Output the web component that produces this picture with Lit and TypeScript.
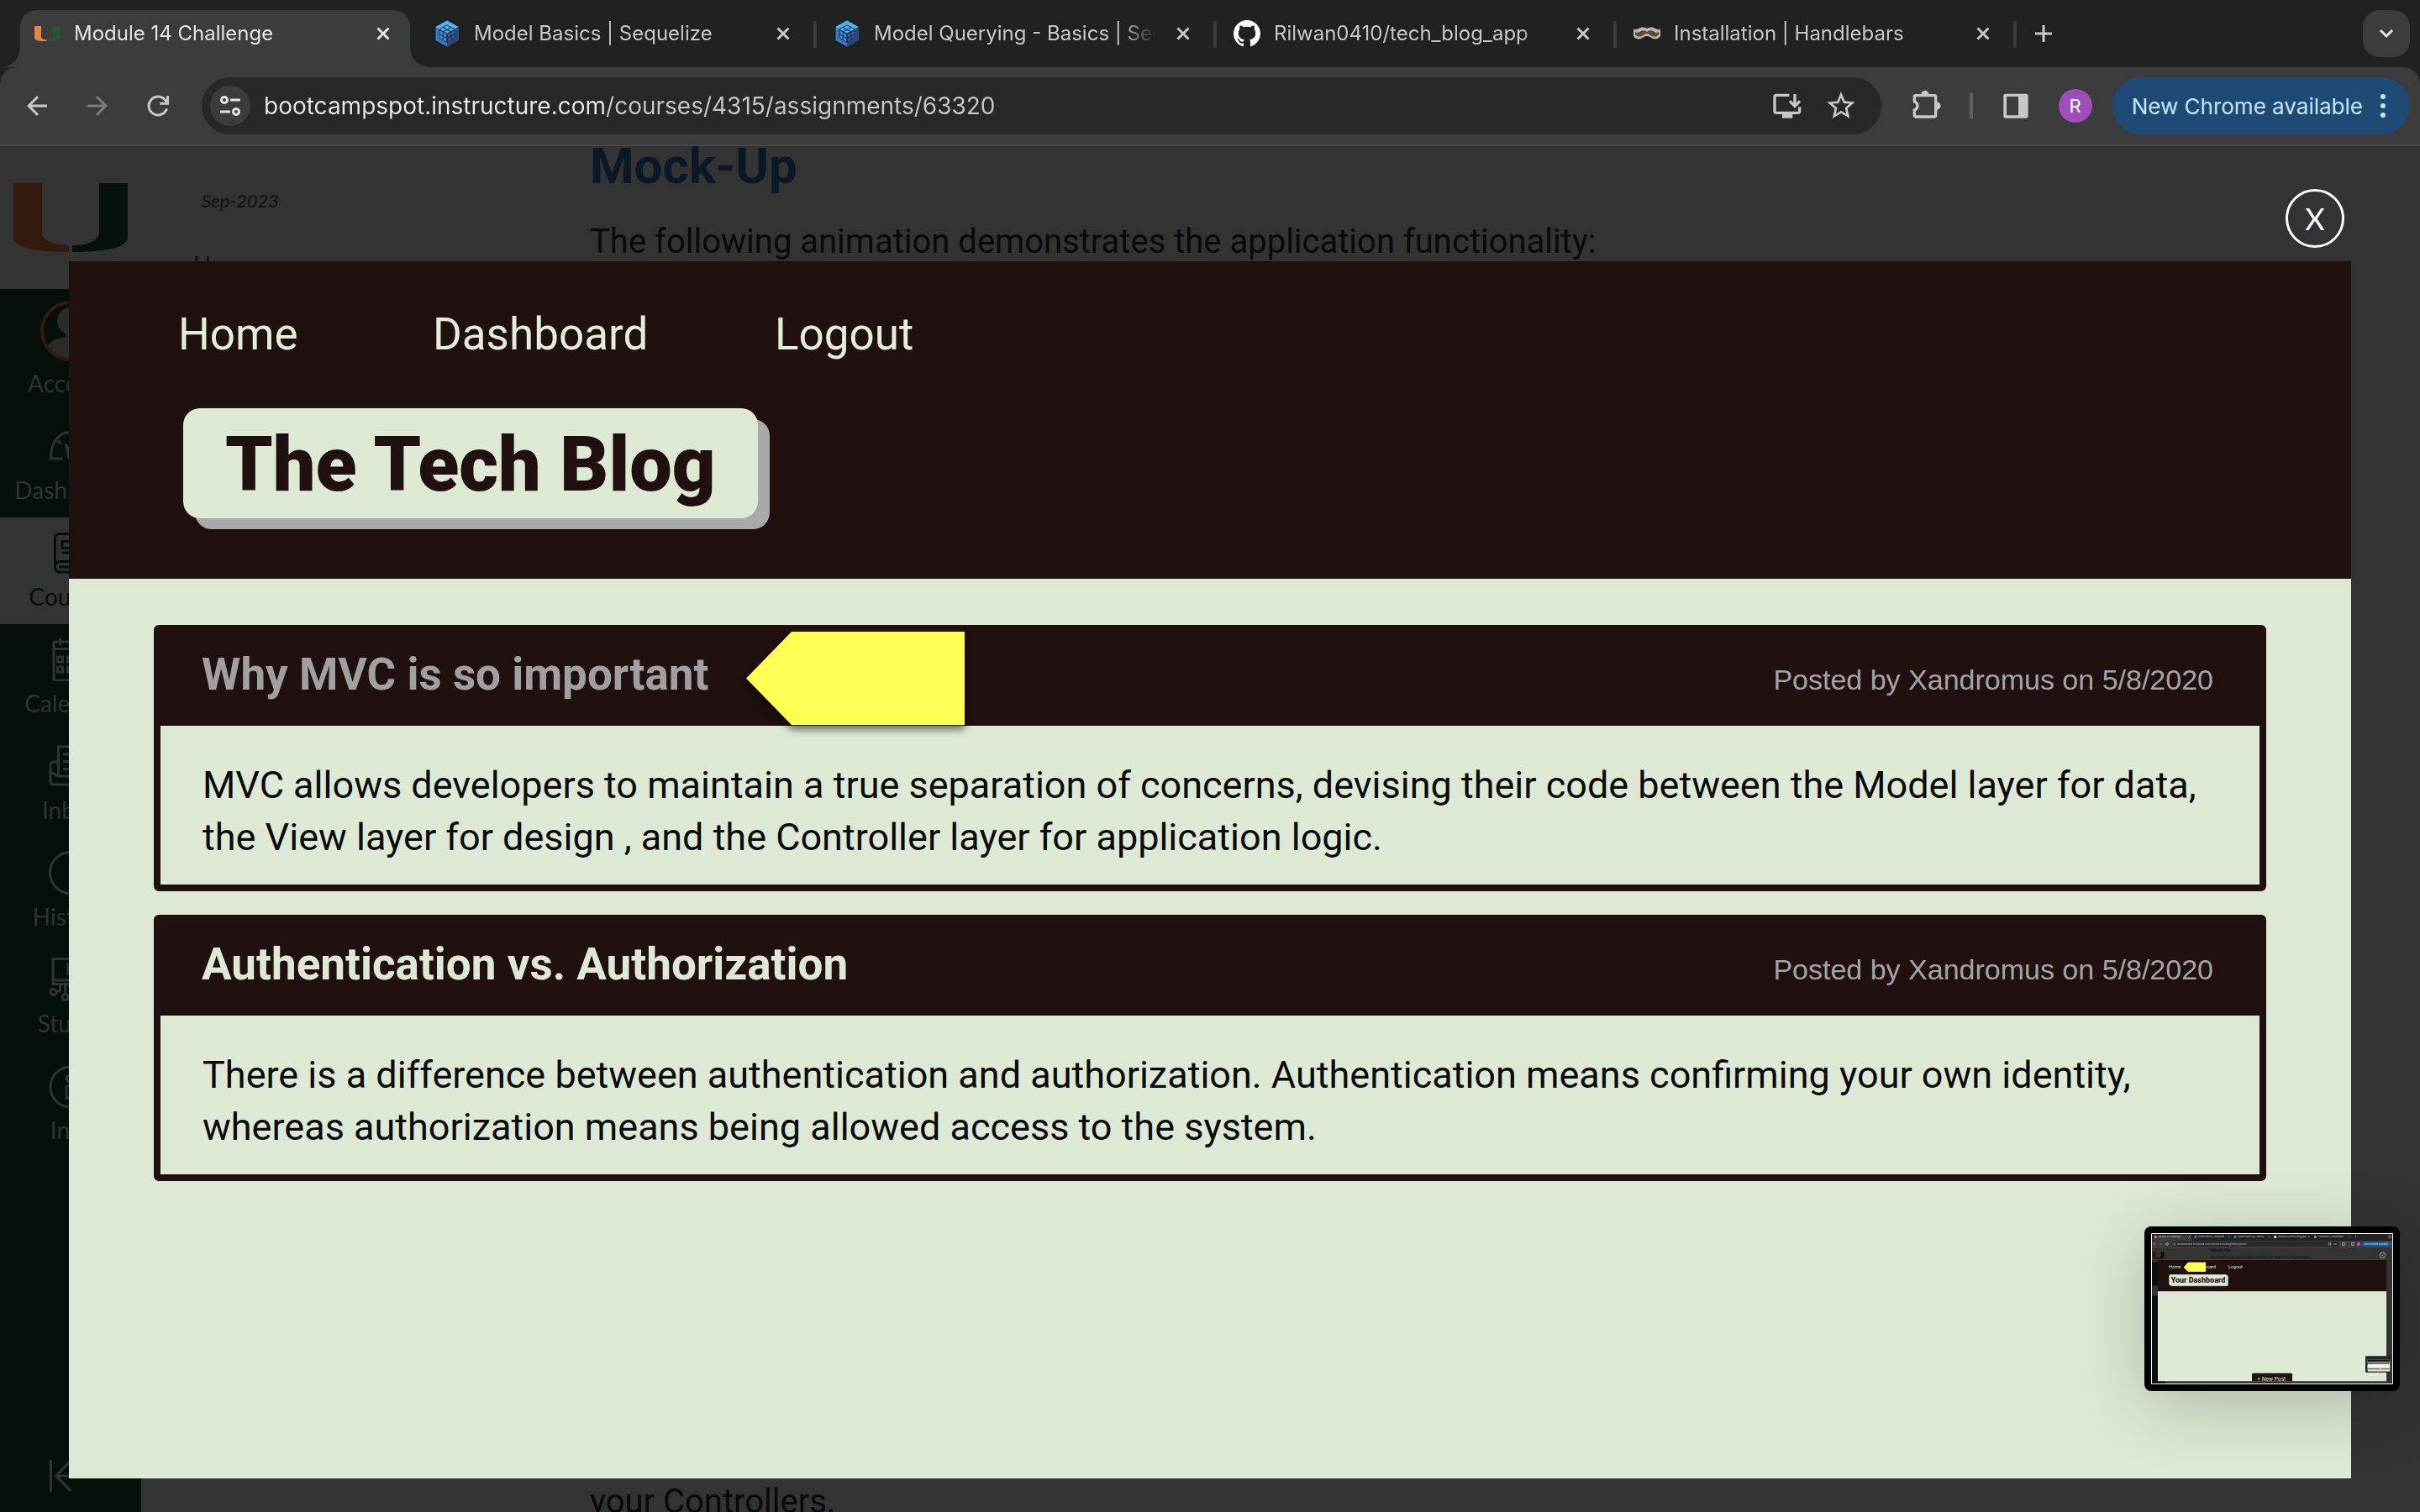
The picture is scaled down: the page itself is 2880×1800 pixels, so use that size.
import { LitElement, html, css, svg, nothing } from "lit";
import { customElement } from "lit/decorators.js";
import { classMap } from "lit/directives/class-map.js";

/* ---------- favicons ---------- */

const favMiami = html`<svg class="fav" viewBox="0 0 32 32" aria-hidden="true">
  <path d="M1 7h8v12c0 3 2 4 6.500 4v2C6 25.500 1 24.500 1 20.500z" fill="#e8843c" />
  <path d="M31 7h-8v12c0 3-2 4-6.500 4v2C26 25.500 31 24.500 31 20.500z" fill="#1f5a35" />
</svg>`;

const favSequelize = html`<svg class="fav" viewBox="0 0 32 32" aria-hidden="true">
  <path d="M16 0.500 29.500 8v16L16 31.500 2.500 24V8z" fill="#3b78c6" />
  <path d="M16 0.500 29.500 8 25.500 10.500 16 5.500 6.500 10.500 2.500 8z" fill="#4db4f2" />
  <path d="M29.500 8v16L16 31.500V27l9.500-5.500v-11z" fill="#33457f" />
  <path d="M16 5.500 25.500 10.500v11L16 27l-9.500-5.500v-11z" fill="#1c2f52" />
  <path d="M16 6.500 24.500 11 16 15.500 7.500 11z" fill="#52b6f3" />
  <path d="M7.500 12.500 15 16.500v9L7.500 21z" fill="#3f8fdc" />
  <path d="M24.500 12.500 17 16.500v9l7.500-4.500z" fill="#35619f" />
  <path d="M11.500 9l8.500 4.500M20.500 9 12 13.500M7.500 17l7.500 4M24.500 17 17 21M11.200 14.500v9M20.800 14.500v9" stroke="#1c2f52" stroke-width="1.200" fill="none" />
</svg>`;

const favGithub = html`<svg class="fav" viewBox="0 0 16 16" aria-hidden="true">
  <path fill="#fff" d="M8 0C3.580 0 0 3.580 0 8c0 3.540 2.290 6.530 5.470 7.590.4.070.550-.170.550-.380 0-.190-.010-.820-.010-1.490-2.010.370-2.530-.490-2.690-.940-.090-.230-.480-.940-.820-1.130-.280-.150-.680-.520-.010-.530.630-.010 1.080.580 1.230.820.720 1.210 1.870.870 2.330.660.070-.520.280-.870.510-1.070-1.780-.2-3.640-.890-3.640-3.950 0-.870.310-1.590.820-2.150-.080-.2-.360-1.020.080-2.120 0 0 .670-.210 2.200.820.640-.180 1.320-.270 2-.270.680 0 1.360.090 2 .270 1.530-1.040 2.200-.820 2.200-.820.440 1.100.160 1.920.080 2.120.510.560.820 1.270.820 2.150 0 3.070-1.870 3.750-3.650 3.950.290.250.540.730.540 1.480 0 1.070-.010 1.930-.010 2.200 0 .210.150.460.550.380A8.013 8.013 0 0 0 16 8c0-4.420-3.580-8-8-8z" />
</svg>`;

const favHandlebars = html`<svg class="fav" viewBox="0 0 32 32" aria-hidden="true">
  <path d="M0 10c2 2 4 1 6 0 3-2 7-2 10 0 3-2 7-2 10 0 2 1 4 2 6 0v9c-2 3-5 4-9 3-2-1-4-3-7-3s-5 2-7 3c-4 1-7 0-9-3z" fill="#bdb5aa" />
  <path d="M2 14c3 2 5 0 7-1 2-1 5-1 7 1 2-2 5-2 7-1 2 1 4 3 7 1v3c-2 3-5 3-8 2s-3-3-6-3-4 2-6 3-6 1-8-2z" fill="#5d4a3a" />
</svg>`;

const iconClose = html`<svg width="16" height="16" viewBox="0 0 16 16" aria-hidden="true">
  <path d="M1.500 1.500l13 13M14.500 1.500l-13 13" stroke="currentColor" stroke-width="3" fill="none" />
</svg>`;

interface Tab {
  title: string;
  icon: unknown;
  active?: boolean;
}

const tabs: Tab[] = [
  { title: "Module 14 Challenge", icon: favMiami, active: true },
  { title: "Model Basics | Sequelize", icon: favSequelize },
  { title: "Model Querying - Basics | Sequelize", icon: favSequelize },
  { title: "Rilwan0410/tech_blog_app", icon: favGithub },
  { title: "Installation | Handlebars", icon: favHandlebars },
];

@customElement("browser-bar")
export class BrowserBar extends LitElement {
  static styles = css`
    :host {
      display: block;
      font-family: Inter, "Liberation Sans", sans-serif;
      background: #1f2221;
    }
    button {
      display: flex;
      align-items: center;
      justify-content: center;
      margin: 0;
      padding: 0;
      border: 0;
      background: none;
      color: inherit;
      font: inherit;
    }
    svg {
      display: block;
      flex: none;
    }
    .strip {
      display: flex;
      align-items: center;
      height: 80px;
      padding: 0 12px 0 18px;
      color: #c7c7c7;
    }
    .tab {
      display: flex;
      align-items: center;
      box-sizing: border-box;
      flex: 0 1 476px;
      min-width: 0;
      height: 56px;
      padding: 0 30px 0 22px;
      position: relative;
    }
    .tab.rule::after {
      content: "";
      position: absolute;
      right: -2px;
      top: 13px;
      width: 4px;
      height: 32px;
      border-radius: 2px;
      background: #3c3c3c;
    }
    .tab.active {
      color: #e3e3e3;
    }
    .tab.active .shape {
      position: absolute;
      inset: 0 6px -12px;
      border-radius: 20px 20px 0 0;
      background: #3c3c3c;
    }
    .shape::before,
    .shape::after {
      content: "";
      position: absolute;
      bottom: 0;
      width: 22px;
      height: 22px;
    }
    .shape::before {
      left: -22px;
      background: radial-gradient(circle at 0 0, transparent 21px, #3c3c3c 22px);
    }
    .shape::after {
      right: -22px;
      background: radial-gradient(circle at 100% 0, transparent 21px, #3c3c3c 22px);
    }
    .fav {
      width: 32px;
      height: 32px;
    }
    .label {
      position: relative;
      display: flex;
      flex: 1;
      gap: 16px;
      min-width: 0;
      justify-content: flex-start;
      font-size: 24px;
      line-height: 32px;
      white-space: nowrap;
      text-align: left;
    }
    .name {
      flex: 1;
      min-width: 0;
      overflow: hidden;
      mask-image: linear-gradient(to right, #000 calc(100% - 44px), transparent);
    }
    .shut {
      position: relative;
      margin-left: 24px;
    }
    .add {
      margin-left: 24px;
    }
    .search {
      width: 56px;
      height: 56px;
      margin-left: auto;
      border-radius: 20px;
      background: #3c3c3c;
      color: #e3e3e3;
    }
    .tools {
      display: flex;
      align-items: center;
      padding: 12px 12px 12px 26px;
      border-bottom: 2px solid #474747;
      border-radius: 20px 20px 0 0;
      background: #3c3c3c;
      color: #c7c7c7;
    }
    .moves {
      display: flex;
      gap: 36px;
      margin-right: 34px;
    }
    .off {
      color: #7d7d7d;
    }
    .omnibox {
      display: flex;
      align-items: center;
      flex: 1;
      min-width: 0;
      height: 68px;
      padding: 0 28px 0 10px;
      border-radius: 34px;
      background: #282828;
    }
    .site {
      flex: none;
      width: 48px;
      height: 48px;
      margin-right: 16px;
      border-radius: 24px;
      background: #3c3c3c;
      color: #e3e3e3;
    }
    .url {
      flex: 1;
      min-width: 0;
      padding: 0;
      border: 0;
      outline: 0;
      font: 28px/36px Inter, "Liberation Sans", sans-serif;
      color: transparent;
      background: linear-gradient(to right, #e8e8e8 407px, #c7c7c7 407px);
      -webkit-background-clip: text;
      background-clip: text;
    }
    .inner {
      display: flex;
      gap: 24px;
    }
    .extras {
      display: flex;
      align-items: center;
      gap: 31px;
      margin: 0 24px 0 34px;
    }
    .rule-v {
      width: 4px;
      height: 32px;
      border-radius: 2px;
      background: #5e5e5e;
    }
    .avatar {
      width: 40px;
      height: 40px;
      border-radius: 50%;
      background: #9f4db9;
      color: #fff;
      font-size: 22px;
    }
    .update {
      gap: 20px;
      height: 68px;
      padding: 0 28px 0 23px;
      border-radius: 34px;
      background: #1f4a75;
      color: #c2e7ff;
      font-size: 26px;
    }
  `;

  private renderTab(tab: Tab) {
    return html`<div class=${classMap({ tab: true, active: !!tab.active, rule: !tab.active })}>
      ${tab.active ? html`<span class="shape"></span>` : nothing}
      <button class="label" role="tab" aria-selected=${tab.active ? "true" : "false"}>
        ${tab.icon}<span class="name">${tab.title}</span>
      </button>
      <button class="shut" aria-label="Close tab">${iconClose}</button>
    </div>`;
  }

  render() {
    return html`
      <div class="strip">
        ${tabs.map((t) => this.renderTab(t))}
        <button class="add" aria-label="New tab">
          <svg width="20" height="20" viewBox="0 0 20 20"><path d="M10 0v20M0 10h20" stroke="currentColor" stroke-width="3" /></svg>
        </button>
        <button class="search" aria-label="Search tabs">
          <svg width="18" height="12" viewBox="0 0 18 12"><path d="M2 2l7 7 7-7" stroke="currentColor" stroke-width="3" fill="none" /></svg>
        </button>
      </div>
      <div class="tools">
        <div class="moves">
          <button aria-label="Back">
            <svg width="36" height="36" viewBox="0 0 24 24"><path fill="currentColor" d="M20 11H7.830l5.590-5.590L12 4l-8 8 8 8 1.410-1.410L7.830 13H20z" /></svg>
          </button>
          <button class="off" aria-label="Forward">
            <svg width="36" height="36" viewBox="0 0 24 24"><path fill="currentColor" d="M4 11h12.170l-5.590-5.590L12 4l8 8-8 8-1.410-1.410L16.170 13H4z" /></svg>
          </button>
          <button aria-label="Reload">
            <svg width="36" height="36" viewBox="0 0 24 24"><path fill="none" stroke="currentColor" stroke-width="2" d="M19 14.200A7.300 7.300 0 1 1 18 7.800L19.500 9.500M19.700 4v6.200H13.500" /></svg>
          </button>
        </div>
        <div class="omnibox">
          <button class="site" aria-label="Site information">
            <svg width="48" height="48" viewBox="0 0 48 48" fill="none" stroke="currentColor" stroke-width="3">
              <circle cx="17" cy="17" r="3.500" /><path d="M24 17h12M12 31h12" /><circle cx="31" cy="31" r="3.500" />
            </svg>
          </button>
          <input class="url" aria-label="Address" spellcheck="false" .value=${"bootcampspot.instructure.com/courses/4315/assignments/63320"} />
          <div class="inner">
            <button aria-label="Install app">
              <svg width="40" height="40" viewBox="78 48 120 120" fill="none" stroke="currentColor" stroke-width="10">
                <path d="M145 70H99q-6 0-6 6v51q0 6 6 6h77q6 0 6-6v-15M165 66v40M147 91l18 18 18-18" />
                <path d="M120 136h37v16h-37z" fill="currentColor" stroke="none" />
              </svg>
            </button>
            <button aria-label="Bookmark">
              <svg width="40" height="40" viewBox="0 0 24 24"><path fill="currentColor" d="M22 9.240l-7.190-.620L12 2 9.190 8.630 2 9.240l5.460 4.730L5.820 21 12 17.270 18.180 21l-1.630-7.030zM12 15.400l-3.760 2.270 1-4.280-3.320-2.880 4.380-.380L12 6.100l1.710 4.040 4.380.380-3.320 2.880 1 4.280z" /></svg>
            </button>
          </div>
        </div>
        <div class="extras">
          <button aria-label="Extensions">
            <svg width="40" height="40" viewBox="576 48 120 120">
              <path d="M597 71h66q5 0 5 5v66q0 5-5 5h-66q-5 0-5-5v-19q11-4 11-15t-11-15V76q0-5 5-5z" fill="none" stroke="currentColor" stroke-width="10" />
              <path d="M616 68a14 15 0 0 1 28 0zM671 94a15 14 0 0 1 0 28z" fill="currentColor" />
            </svg>
          </button>
          <span class="rule-v"></span>
          <button aria-label="Side panel">
            <svg width="40" height="40" viewBox="894 48 120 120"><path fill="currentColor" fill-rule="evenodd" d="M918 65h72q8 0 8 8v71q0 8-8 8h-72q-8 0-8-8V73q0-8 8-8zm3 10v67h42V75z" /></svg>
          </button>
          <button class="avatar" aria-label="Profile">R</button>
        </div>
        <button class="update">
          New Chrome available
          <svg width="8" height="28" viewBox="0 0 8 28" fill="currentColor"><circle cx="4" cy="3" r="3" /><circle cx="4" cy="14" r="3" /><circle cx="4" cy="25" r="3" /></svg>
        </button>
      </div>
    `;
  }
}

/* ---------- course site behind the lightbox ---------- */

interface NavItem {
  label: string;
  icon: unknown;
  current?: boolean;
}

const navItems: NavItem[] = [
  {
    label: "Dashboard",
    icon: svg`<path d="M16.700 41H2.500C2.500 21 12 9.500 26 9.500S49.500 21 49.500 41H35.300M10.500 19.500l4 4M20.500 24l3 15q2.500 5 5 0l-2-4z" />`,
  },
  {
    label: "Courses",
    current: true,
    icon: svg`<path d="M45 36.500V3.500H13q-5.500 0-5.500 5.500v34q0 6 6 6H45M7.500 42q1-5.500 6-5.500H45v12M12 43h30M16 12.500h20v8H16zM16 26h20" />`,
  },
  {
    label: "Calendar",
    icon: svg`<path d="M6 51V7q0-2 2-2h36q2 0 2 2v42q0 2-2 2H6M5 13.500h41M13.700 0v9M38 0v9M10.500 23h6v6h-6zM22.500 23h6v6h-6zM34.500 23h6v6h-6zM10.500 35h6v6h-6zM22.500 35h6v6h-6zM34.500 35h6v6h-6z" />`,
  },
  {
    label: "Inbox",
    icon: svg`<path d="M11.500 38V3h29v35M17 12h18M17 20.500h18M17 29.500h18M11.500 21H6q-4 0-4 4v19q0 4 4 4h40q4 0 4-4V25q0-4-4-4h-5.500M2 33l9 5h30l9-5" />`,
  },
  {
    label: "History",
    icon: svg`<circle cx="26" cy="26" r="24.500" /><path d="M32 12v16h10" />`,
  },
  {
    label: "Studio",
    icon: svg`<path d="M5 1.500h42v30H5zM5 27h42M23 9l9 5-9 5zM13.500 31.500V40H9M19.500 31.500V43M32.500 31.500V43M38.500 31.500V40H43" /><circle cx="5.500" cy="41" r="3.500" /><circle cx="19.500" cy="47" r="3.500" /><circle cx="32.500" cy="47" r="3.500" /><circle cx="46.500" cy="41" r="3.500" />`,
  },
  {
    label: "Info",
    icon: svg`<circle cx="26" cy="27" r="24" /><circle cx="24.500" cy="17" r="3.500" /><path d="M21 26h7v14M21 26v14h10" />`,
  },
];

@customElement("course-page")
export class CoursePage extends LitElement {
  static styles = css`
    :host {
      display: flex;
      flex: 1;
      min-height: 0;
      overflow: hidden;
      background: #333;
      font-family: Lato, "Liberation Sans", sans-serif;
    }
    svg {
      display: block;
    }
    .rail {
      display: flex;
      flex-direction: column;
      flex: none;
      width: 168px;
      background: #06100b;
      color: #2f3331;
    }
    .brand {
      display: block;
      padding: 44px 16px;
      background: #333;
    }
    .item {
      display: flex;
      flex-direction: column;
      align-items: center;
      gap: 9px;
      padding: 16px 0;
      color: inherit;
      text-decoration: none;
      font-size: 28px;
      line-height: 34px;
    }
    .item.account {
      padding-top: 14px;
    }
    .item.current {
      background: #333;
      color: #06100b;
    }
    .collapse {
      margin: auto auto 20px;
      padding: 0;
      border: 0;
      background: none;
      color: inherit;
    }
    .side {
      flex: none;
      width: 472px;
      padding: 52px 0 0 62px;
    }
    .term {
      margin: 0 0 46px;
      padding-left: 10px;
      font-size: 22px;
      line-height: 26px;
      font-style: italic;
      color: #101010;
    }
    .side a {
      color: #07130d;
      text-decoration: none;
      font-size: 28px;
      line-height: 34px;
    }
    .doc {
      display: flex;
      flex-direction: column;
      flex: 1;
      min-width: 0;
      font-family: Roboto, "Liberation Sans", sans-serif;
      color: #0a0a0a;
    }
    h2 {
      margin: -12px 0 24px;
      font-size: 60px;
      line-height: 72px;
      font-weight: 700;
      color: #0a1828;
    }
    p {
      margin: 0;
      font-size: 40px;
      line-height: 60px;
    }
    .last {
      margin: auto 0 -18px;
    }
  `;

  render() {
    return html`
      <nav class="rail" aria-label="Global">
        <a class="brand" href="#" aria-label="Institution home">
          <svg width="136" height="82" viewBox="0 0 136 82" aria-hidden="true">
            <path d="M0 0h34v58c0 10 12 16 32 16v8C25 82 0 76 0 65z" fill="#34190d" />
            <path d="M136 0h-34v58c0 10-12 16-32 16v8c41 0 66-6 66-17z" fill="#06130c" />
          </svg>
        </a>
        <a class="item account" href="#">
          <svg width="72" height="72" viewBox="0 0 72 72" aria-hidden="true">
            <circle cx="36" cy="36" r="34" fill="#06100b" />
            <circle cx="36" cy="24" r="16" fill="#2b2b2b" />
            <path d="M9 53q5-8 21-9.500V38h12v5.500Q58 45 63 53 54 69 36 70 18 69 9 53z" fill="#2b2b2b" />
            <circle cx="36" cy="36" r="34" fill="none" stroke="#34190d" stroke-width="4" />
          </svg>
          Account
        </a>
        ${navItems.map(
          (n) => html`<a class=${classMap({ item: true, current: !!n.current })} href="#">
            <svg width="52" height="52" viewBox="0 0 52 52" fill="none" stroke="currentColor" stroke-width="3" aria-hidden="true">${n.icon}</svg>
            ${n.label}
          </a>`
        )}
        <button class="collapse" aria-label="Minimize navigation">
          <svg width="50" height="46" viewBox="0 0 50 46" fill="none" stroke="currentColor" stroke-width="3">
            <path d="M1.500 4v38M8 23h42M25 5 8 23l17 18" />
          </svg>
        </button>
      </nav>
      <div class="side">
        <p class="term">Sep-2023</p>
        <a href="#">Home</a>
      </div>
      <main class="doc">
        <h2>Mock-Up</h2>
        <p>The following animation demonstrates the application functionality:</p>
        <p class="last">your Controllers.</p>
      </main>
    `;
  }
}

/* ---------- tech blog mock-up shown in the lightbox ---------- */

interface Post {
  title: string;
  meta: string;
  body: string;
  hovered?: boolean;
}

const posts: Post[] = [
  {
    title: "Why MVC is so important",
    meta: "Posted by Xandromus on 5/8/2020",
    body: "MVC allows developers to maintain a true separation of concerns, devising their code between the Model layer for data, the View layer for design , and the Controller layer for application logic.",
    hovered: true,
  },
  {
    title: "Authentication vs. Authorization",
    meta: "Posted by Xandromus on 5/8/2020",
    body: "There is a difference between authentication and authorization. Authentication means confirming your own identity, whereas authorization means being allowed access to the system.",
  },
];

@customElement("blog-mockup")
export class BlogMockup extends LitElement {
  static styles = css`
    :host {
      display: block;
      background: #dde9d5;
      font-family: Roboto, "Liberation Sans", sans-serif;
    }
    header {
      padding: 56px 130px 72px;
      background: #201010;
    }
    .links {
      display: grid;
      grid-template-columns: 303px 407px auto;
      justify-content: start;
      margin: 0 0 57px;
      padding: 0;
      list-style: none;
    }
    .links a {
      color: #e2eeda;
      text-decoration: none;
      font-size: 53px;
      line-height: 62px;
    }
    h1 {
      width: fit-content;
      margin: 0 0 0 6px;
      padding: 16px 50px 11px;
      border-radius: 20px;
      background: #dde9d5;
      box-shadow: 14px 13px 0 #a9a9a9;
      color: #201010;
      font-size: 90px;
      line-height: 104px;
      font-weight: 900;
    }
    .posts {
      display: flex;
      flex-direction: column;
      gap: 28px;
      padding: 55px 101px;
    }
    article {
      border: 8px solid #201010;
      border-radius: 6px;
    }
    .head {
      display: flex;
      justify-content: space-between;
      align-items: baseline;
      padding: 20px 55px 30px 49px;
      background: #201010;
    }
    h2 {
      position: relative;
      margin: 0;
      font-size: 53px;
      line-height: 62px;
      font-weight: 700;
    }
    h2 a {
      color: #dde9d5;
      text-decoration: none;
    }
    h2 a.hovered {
      color: #a0a0a0;
    }
    .marker {
      position: absolute;
      left: calc(100% + 44px);
      top: -20px;
      filter: drop-shadow(0 6px 4px rgba(0, 0, 0, 0.5));
    }
    .meta {
      color: #a3a3a3;
      font: 34px/40px "Liberation Sans", Arial, sans-serif;
    }
    .text {
      margin: 0;
      padding: 40px 49px 25px 50px;
      color: #0a0a0a;
      font-size: 45px;
      line-height: 62px;
    }
  `;

  render() {
    return html`
      <header>
        <ul class="links">
          <li><a href="#">Home</a></li>
          <li><a href="#">Dashboard</a></li>
          <li><a href="#">Logout</a></li>
        </ul>
        <h1>The Tech Blog</h1>
      </header>
      <div class="posts">
        ${posts.map(
          (p) => html`<article>
            <div class="head">
              <h2>
                <a href="#" class=${classMap({ hovered: !!p.hovered })}>${p.title}</a>
                ${p.hovered
                  ? html`<svg class="marker" width="260" height="111" viewBox="0 0 260 111" aria-hidden="true"><path d="M0 55.500 54 0h206v111H54z" fill="#ffff54" /></svg>`
                  : nothing}
              </h2>
              <span class="meta">${p.meta}</span>
            </div>
            <p class="text">${p.body}</p>
          </article>`
        )}
      </div>
    `;
  }
}

/* ---------- floating preview of the last screen capture ---------- */

const previewTabs: [number, string, string][] = [
  [26, "Module 14 Challenge", "#e8843c"],
  [168, "Model Basics | Sequelize", "#3b8fdc"],
  [310, "Model Querying - Basics", "#3b8fdc"],
  [453, "Rilwan0410/tech_blog_app", "#ffffff"],
  [596, "Installation | Handlebars", "#a09a90"],
];

@customElement("capture-preview")
export class CapturePreview extends LitElement {
  static styles = css`
    :host {
      display: block;
      padding: 8px;
      border-radius: 8px;
      background: #000;
      box-shadow: 0 16px 80px rgba(0, 0, 0, 0.22);
    }
    svg {
      display: block;
      font-family: Roboto, "Liberation Sans", sans-serif;
    }
    .ui {
      font-family: Inter, "Liberation Sans", sans-serif;
      font-size: 8px;
    }
  `;

  render() {
    return html`<svg width="288" height="180" viewBox="0 0 864 540" role="img" aria-label="Previous capture">
      <path d="M0 0h864v540H0z" fill="#333" />
      <path d="M3 3h858v24H3z" fill="#1f2221" />
      <path d="M8 7h137v20H8zM3 27h858v27H3z" fill="#3c3c3c" />
      <rect x="72" y="30" width="598" height="18" rx="9" fill="#282828" />
      <rect x="754" y="30" width="105" height="18" rx="9" fill="#1f5a94" />
      ${previewTabs.map(
        ([x, label, color]) => svg`<rect x=${x - 14} y="9" width="8" height="9" rx="3" fill=${color} /><text class="ui" x=${x} y="16" fill="#c7c7c7">${label}</text><path d=${`M${x + 108} 11l5 5m0-5l-5 5`} stroke="#c7c7c7" stroke-width="1.500" />`
      )}
      <path d="M730 10v6m-3-3h6" stroke="#c7c7c7" stroke-width="1.500" />
      <circle cx="852" cy="13" r="8" fill="#4a4a4a" />
      <path d="M8 39h9m-9 0l4-4m-4 4l4 4M31 39h9" stroke="#a8a8a8" stroke-width="1.500" fill="none" />
      <circle cx="57" cy="39" r="4" fill="none" stroke="#c7c7c7" stroke-width="2" />
      <circle cx="82" cy="39" r="6" fill="#5a5a5a" />
      <text class="ui" x="93" y="42" fill="#c7c7c7">bootcampspot.instructure.com/courses/4315/assignments/63320</text>
      <path d="M633 35h9v7h-9zM652 39h10M683 34h8v9h-8zM716 34h8v9h-8z" stroke="#c7c7c7" stroke-width="2" fill="none" />
      <circle cx="741" cy="39" r="6" fill="#b85ad0" />
      <text class="ui" x="761" y="42" fill="#c2e7ff">New Chrome available</text>
      <path d="M3 103h48v434H3z" fill="#06100b" />
      <path d="M3 188h48v36H3z" fill="#333" />
      <path d="M6 67h11v17q1 5 11 5v4Q7 92 6 86z" fill="#34190d" />
      <path d="M46 67H35v17q-1 5-10 5v4q20-1 21-7z" fill="#06130c" />
      <text x="210" y="66" font-size="18" font-weight="700" fill="#0a1828">Mock-Up</text>
      <text x="210" y="91" font-size="12" fill="#0a0a0a">The following animation demonstrates the application functionality:</text>
      <circle cx="826" cy="79" r="10" fill="none" stroke="#d0d0d0" stroke-width="2" />
      <path d="M823 76l6 6m0-6l-6 6" stroke="#d0d0d0" stroke-width="1.500" />
      <path d="M24 94h816v435H24z" fill="#dde9d5" />
      <path d="M24 94h816v114H24z" fill="#201010" />
      <g fill="#dde9d5" font-size="16">
        <text x="63" y="126">Home</text>
        <text x="154" y="126">Dashboard</text>
        <text x="276" y="126">Logout</text>
      </g>
      <path d="M116 122l16-18h63v34h-63z" fill="#ffff54" />
      <rect x="68" y="151" width="208" height="39" rx="6" fill="#a9a9a9" />
      <rect x="64" y="148" width="208" height="39" rx="6" fill="#dde9d5" />
      <text x="71" y="176" font-size="27" font-weight="800" fill="#201010">Your Dashboard</text>
      <path d="M360 529v-24q0-5 5-5h134q5 0 5 5v24z" fill="#201010" />
      <text x="379" y="527" font-size="20" fill="#dde9d5">+ New Post</text>
      <rect x="765" y="439" width="92" height="59" rx="4" fill="#23272a" />
      <path d="M773 451h80v43h-80z" fill="#dde9d5" />
      <path d="M773 451h80v8h-80z" fill="#201010" />
      <path d="M773 461h78v6h-78z" fill="#5a4a48" />
      <path d="M773 472h78v10h-78z" fill="#f6faf4" />
      <path d="M773 482h78v5h-78z" fill="#777" />
      <path d="M816 481h6v6h-6z" fill="#e6e04a" />
      <path d="M1.500 1.500h861v537h-861z" fill="none" stroke="#fff" stroke-width="3" />
    </svg>`;
  }
}

@customElement("app-root")
export class AppRoot extends LitElement {
  static styles = css`
    :host {
      display: flex;
      flex-direction: column;
      height: 100vh;
      overflow: hidden;
      background: #333;
    }
    .stage {
      display: flex;
      flex: 1;
      min-height: 0;
      position: relative;
    }
    .lightbox {
      position: absolute;
      inset: 0;
      display: flex;
      padding: 137px 82px 40px;
    }
    .lightbox blog-mockup {
      flex: 1;
      min-width: 0;
    }
    .close {
      position: absolute;
      top: 51px;
      right: 90px;
      width: 70px;
      height: 70px;
      padding: 0;
      border: 3px solid #fff;
      border-radius: 50%;
      background: none;
      color: #fff;
      font: 36px/40px Lato, "Liberation Sans", sans-serif;
    }
    .preview {
      position: absolute;
      right: 24px;
      bottom: 144px;
    }
  `;

  render() {
    return html`
      <browser-bar></browser-bar>
      <div class="stage">
        <course-page></course-page>
        <div class="lightbox" role="dialog" aria-label="Mock-up animation">
          <blog-mockup></blog-mockup>
          <button class="close" aria-label="Close">X</button>
        </div>
        <capture-preview class="preview"></capture-preview>
      </div>
    `;
  }
}
